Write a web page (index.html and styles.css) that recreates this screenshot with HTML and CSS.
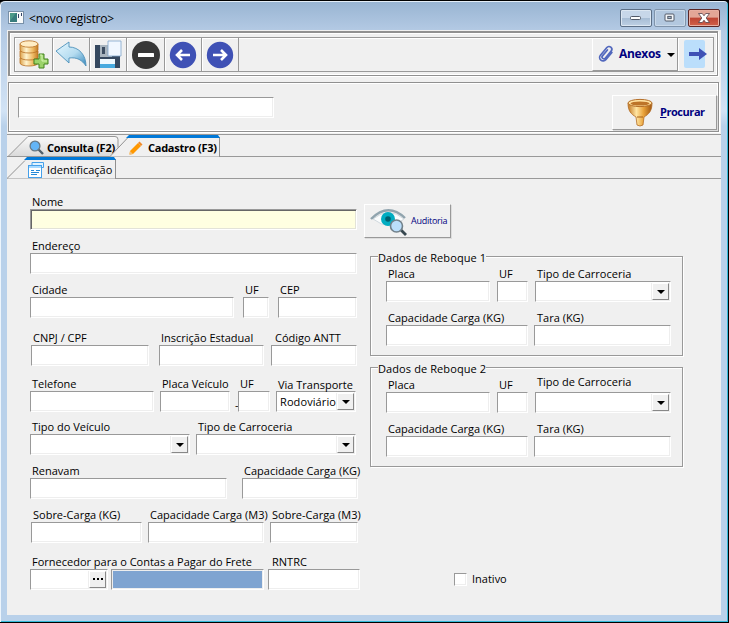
FILE: index.html
```html
<!DOCTYPE html>
<html lang="pt-BR">
<head>
<meta charset="utf-8">
<title>novo registro</title>
<link rel="stylesheet" href="styles.css">
</head>
<body>
<div class="window">
  <header class="titlebar">
    <svg class="app-icon" width="16" height="14" viewBox="0 0 16 14"><rect x=".5" y=".5" width="15" height="12" fill="#f8fafa" stroke="#7890a8"/><rect x="2" y="2" width="7" height="9" fill="#387c7c"/><path d="M2 2h6L2 10z" fill="#4c9a88"/><path d="M10 3h1v4h-1zM13 2h1v3h-1z" fill="#346"/></svg>
    <span class="title">&lt;novo registro&gt;</span>
    <div class="controls">
      <span class="ctl"><svg width="12" height="6"><rect x=".5" y="1.500" width="10" height="3" rx="1" fill="#fff" stroke="#535a68"/></svg></span>
      <span class="ctl dim"><svg width="12" height="10"><rect x="1" y="1" width="9" height="7" rx="1" fill="#f4f7fa" stroke="#535a68"/><rect x="3.800" y="3.400" width="3.400" height="2.200" fill="#a9bdd2" stroke="#535a68"/></svg></span>
      <span class="ctl close"><svg width="12" height="10" viewBox="0 0 12 10"><path d="M.5.5h3.800L6 2.800 7.700.5h3.800L8.200 5l3.300 4.500H7.700L6 7.200 4.300 9.500H.5L3.800 5z" fill="#fff" stroke="#574049" stroke-width=".8"/></svg></span>
    </div>
  </header>

  <main class="client">
    <div class="panel tools">
      <div class="strip">
        <span class="tool w38"><svg width="31" height="31" viewBox="0 0 31 31"><defs><linearGradient id="gold"><stop offset="0" stop-color="#dda24b"/><stop offset=".35" stop-color="#fff4cf"/><stop offset=".7" stop-color="#efbd68"/><stop offset="1" stop-color="#c47b25"/></linearGradient></defs><g fill="url(#gold)" stroke="#b97125" stroke-width=".8"><path d="M2 19v5c0 4 18 4 18 0v-5z"/><path d="M2 12v6c0 4 18 4 18 0v-6z"/><path d="M2 5v6c0 4 18 4 18 0V5z"/><ellipse cx="11" cy="5" rx="9" ry="3.200" fill="#ffedc4"/></g><path d="M21 15h5v5h4v5h-4v4h-5v-4h-5v-5h5z" fill="#9bd36a" stroke="#43821e"/><path d="M22 16h2v6h5" fill="none" stroke="#d7f5b3"/></svg></span>
        <span class="tool w37"><svg width="33" height="30" viewBox="0 0 33 30"><defs><linearGradient id="ice" x2="1" y2="1"><stop offset="0" stop-color="#e7f8ff"/><stop offset=".55" stop-color="#b5dcf0"/><stop offset="1" stop-color="#3688bd"/></linearGradient></defs><path d="M1 11 14 2v5c10 0 17 8 17 19-4-6-9-9-17-8v5z" fill="url(#ice)" stroke="#4d91ba" stroke-width=".9"/></svg></span>
        <span class="tool w37"><svg width="28" height="30" viewBox="0 0 28 30"><path d="M1 5h22l3 3v20H1z" fill="#35485f"/><path d="M6 5h12v12H6z" fill="#a9b5bf"/><path d="M8 7h3v7H8z" fill="#3c4d61"/><path d="M14 1h13v15H14z" fill="#f0f7ff" stroke="#81a6cc" stroke-width=".8"/><path d="M6 19h15v9H6z" fill="#eef9ff"/><path d="M6 24h15v4H6z" fill="#47aadf"/></svg></span>
        <span class="tool w38"><svg width="30" height="30"><circle cx="15" cy="15" r="14" fill="#373737"/><rect x="7" y="13" width="16" height="4" rx=".6" fill="#fff"/></svg></span>
        <span class="tool w37"><svg width="28" height="28"><circle cx="14" cy="14" r="13.200" fill="#3f51b5"/><path d="M21 14H9M13 9l-5 5 5 5" fill="none" stroke="#fff" stroke-width="2.600"/></svg></span>
        <span class="tool w37"><svg width="28" height="28"><circle cx="14" cy="14" r="13.200" fill="#3f51b5"/><path d="M7 14h12M15 9l5 5-5 5" fill="none" stroke="#fff" stroke-width="2.600"/></svg></span>
        <div class="anexos">
          <svg class="clip" width="18" height="18" viewBox="0 0 18 18"><g transform="rotate(40 9 9)" fill="none" stroke="#5268bd" stroke-width="1.700" stroke-linecap="round"><path d="M12.500 4v9.500a3.500 3.500 0 0 1-7 0V3.500a2.800 2.800 0 0 1 5.600 0v9.200a1.800 1.800 0 0 1-3.600 0V5"/></g></svg>
          <b>Anexos</b>
          <i class="drop"></i>
        </div>
        <span class="exit"><svg width="24" height="28"><rect width="21" height="28" rx="2" fill="#bbdefb"/><path d="M5 12h10V8l8 6-8 6v-4H5z" fill="#3f51b5"/></svg></span>
      </div>
    </div>

    <div class="panel search">
      <div class="box query"></div>
      <div class="button find">
        <svg width="26" height="30" viewBox="0 0 26 30"><defs><linearGradient id="amber"><stop offset="0" stop-color="#c37823"/><stop offset=".35" stop-color="#ffe5a2"/><stop offset=".65" stop-color="#e9a239"/><stop offset="1" stop-color="#9d5511"/></linearGradient></defs><path d="M1 5c0 8 3 11 8 14l1 8q3 2 6 0l1-8c5-3 8-6 8-14z" fill="url(#amber)" stroke="#b36c24" stroke-width=".8"/><ellipse cx="13" cy="5" rx="12" ry="3.600" fill="#ffe2a0" stroke="#b56f29"/><ellipse cx="13" cy="5.500" rx="9.500" ry="2.100" fill="#bd7428"/><path d="M10 19h6" stroke="#a65e17"/></svg>
        <b><u>P</u>rocurar</b>
      </div>
    </div>

    <nav class="tabs main">
      <div class="tab consulta">
        <svg class="shape" width="112" height="22"><defs><linearGradient id="tabfill" x2="0" y2="1"><stop offset="0" stop-color="#fafafa"/><stop offset="1" stop-color="#d9d9d9"/></linearGradient></defs><path d="M1 21.500 21 1.500h87l3 3v8l-9 9z" fill="url(#tabfill)"/><path d="M1 21.500 21 1.500h87q3 0 3 3v8M1 21.500h101" fill="none" stroke="#979797"/></svg>
        <svg width="15" height="15" viewBox="0 0 15 15"><path d="m9 9 5 5" stroke="#50606b" stroke-width="2.400"/><circle cx="6" cy="6" r="4.900" fill="#64b5f6" stroke="#687985" stroke-width="1.300"/></svg>
        <b>Consulta (F2)</b>
      </div>
      <div class="tab cadastro">
        <svg class="shape" width="112" height="22"><path d="M1 21.500 20 1.500h90v20z" fill="#f0f0f0"/><path d="M1 21.500 19 2.500M110.500 2v20" fill="none" stroke="#909090"/><path d="M20 0h89l2 3H17z" fill="#0078d7"/></svg>
        <svg width="14" height="14" viewBox="0 0 14 14"><path d="m1 10 8-8 3 3-8 8-3.500.5z" fill="#ff9800"/><path d="m9 2 1.500-1.500 3 3L12 5z" fill="#f08a2b"/><path d="m1 10 3 3-3.500.7z" fill="#f0bd78"/></svg>
        <b>Cadastro (F3)</b>
      </div>
    </nav>
    <nav class="tabs sub">
      <div class="tab ident">
        <svg class="shape" width="112" height="22"><path d="M0 21.500 20 1.500h88v20z" fill="#f0f0f0"/><path d="M0 21.500 18 3.500M108.500 2v20" fill="none" stroke="#909090"/><path d="M20 0h87l2 3H17z" fill="#0078d7"/></svg>
        <svg width="16" height="16" viewBox="0 0 16 16"><path d="M4 .5h11.500v5H14V5H4z" fill="#e0f3ff" stroke="#45a0ea"/><rect x=".5" y="3.500" width="13" height="12" fill="#fff" stroke="#45a0ea"/><path d="M1 4h12v2H1z" fill="#a8daff"/><path d="M3 8.500h3M8 8.500h4M3 10.500h8M3 12.500h6" stroke="#2589d7"/></svg>
        <span>Identificação</span>
      </div>
    </nav>

    <section class="sheet">
      <div class="left">
        <div class="row r1"><div class="field"><label>Nome</label><div class="box focus"></div></div></div>
        <div class="row r1"><div class="field"><label>Endereço</label><div class="box"></div></div></div>
        <div class="row r3"><div class="field"><label>Cidade</label><div class="box"></div></div><div class="field"><label>UF</label><div class="box"></div></div><div class="field"><label>CEP</label><div class="box"></div></div></div>
        <div class="row r4"><div class="field"><label>CNPJ / CPF</label><div class="box"></div></div><div class="field"><label>Inscrição Estadual</label><div class="box"></div></div><div class="field"><label class="in4">Código ANTT</label><div class="box"></div></div></div>
        <div class="row r5"><div class="field"><label>Telefone</label><div class="box"></div></div><div class="field"><label>Placa Veículo</label><div class="box"></div></div><span class="dash">-</span><div class="field"><label>UF</label><div class="box"></div></div><div class="field"><label class="low">Via Transporte</label><div class="box combo"><span>Rodoviário</span><i class="arrow"></i></div></div></div>
        <div class="row r6"><div class="field"><label>Tipo do Veículo</label><div class="box combo"><i class="arrow"></i></div></div><div class="field"><label>Tipo de Carroceria</label><div class="box combo"><i class="arrow"></i></div></div></div>
        <div class="row r7"><div class="field"><label>Renavam</label><div class="box"></div></div><div class="field"><label>Capacidade Carga (KG)</label><div class="box"></div></div></div>
        <div class="row r8"><div class="field"><label>Sobre-Carga (KG)</label><div class="box"></div></div><div class="field"><label>Capacidade Carga (M3)</label><div class="box"></div></div><div class="field"><label>Sobre-Carga (M3)</label><div class="box"></div></div></div>
        <div class="row r9"><div class="field"><label>Fornecedor para o Contas a Pagar do Frete</label><div class="box combo"><i class="dots"></i></div></div><div class="field bare"><div class="box blue"></div></div><div class="field"><label class="in4">RNTRC</label><div class="box"></div></div></div>
      </div>

      <div class="right">
        <div class="button audit">
          <svg width="39" height="30" viewBox="0 0 39 30"><path d="M3 13Q19 0 34 13 20 26 3 13" fill="#fafcfd" stroke="#d0d8dd"/><circle cx="18" cy="13" r="7" fill="#00acc1"/><circle cx="18" cy="13" r="2.800" fill="#006070"/><path d="M1 13Q18-4 35 12" fill="none" stroke="#90a4ae" stroke-width="2.400"/><path d="m31 24 5 5" stroke="#37474f" stroke-width="2.800"/><circle cx="26.500" cy="20" r="6" fill="#bbdefb" stroke="#71808a" stroke-width="1.600"/></svg>
          <span>Auditoria</span>
        </div>
        <div class="group">
          <span class="legend">Dados de Reboque 1</span>
          <div class="row g1"><div class="field"><label>Placa</label><div class="box"></div></div><div class="field"><label>UF</label><div class="box"></div></div><div class="field"><label>Tipo de Carroceria</label><div class="box combo"><i class="arrow"></i></div></div></div>
          <div class="row g2"><div class="field"><label>Capacidade Carga (KG)</label><div class="box"></div></div><div class="field"><label class="in3">Tara (KG)</label><div class="box"></div></div></div>
        </div>
        <div class="group">
          <span class="legend">Dados de Reboque 2</span>
          <div class="row g1"><div class="field"><label>Placa</label><div class="box"></div></div><div class="field"><label>UF</label><div class="box"></div></div><div class="field"><label class="high">Tipo de Carroceria</label><div class="box combo"><i class="arrow"></i></div></div></div>
          <div class="row g2"><div class="field"><label>Capacidade Carga (KG)</label><div class="box"></div></div><div class="field"><label class="in3">Tara (KG)</label><div class="box"></div></div></div>
        </div>
        <div class="inactive"><i class="check"></i><span>Inativo</span></div>
      </div>
    </section>
  </main>
</div>
</body>
</html>
```
FILE: styles.css
```css
* { box-sizing: border-box; }
body { margin: 0; overflow: hidden; background: #000; font: 11px/14px "Open Sans", "Noto Sans", sans-serif; color: #000; }
svg { display: block; flex: none; }
b { font-weight: 700; }

.window { width: 729px; height: 623px; padding: 0 6px 7px 6px; border: 1px solid #000; border-width: 1px 1px 1px 0; border-radius: 5px 5px 0 0; background: linear-gradient(#98b4d2, #b4cae4 30px, #d2e3f5 110px, #b9d1ea 125px); box-shadow: inset 1px 0 #edf5fc, inset -1px -1px #35b9d8, inset 0 1px #e4eef8; }
.titlebar { height: 29px; display: flex; align-items: flex-start; padding: 10px 2px 0 2px; }
.title { margin: 0 0 0 5px; font-size: 12px; line-height: 16px; letter-spacing: -.2px; }
.controls { display: flex; gap: 2px; margin: -2px 0 0 auto; }
.ctl { width: 32px; height: 18px; display: flex; align-items: center; justify-content: center; border: 1px solid #5c6f86; border-radius: 2px; background: linear-gradient(#c7d7e9 0 48%, #a6bcd4 50%, #bed0e4); box-shadow: inset 0 0 0 1px #dce7f2; }
.ctl.dim { border-color: #8094ab; background: #b3c8df; box-shadow: inset 0 0 0 1px #c9d9ea; }
.ctl.close { border-color: #5b2727; background: linear-gradient(#e3a697 0 45%, #be4534 50%, #d1614a); box-shadow: inset 0 0 0 1px #e8afa2; }

.client { height: 585px; margin-left: 1px; width: 714px; background: #f0f0f0; }
.panel { border: 1px solid #909090; box-shadow: inset 1px 1px #fff, 1px 1px #fff, inset -1px -1px #fff; }
.tools { margin: 0 3px 0 1px; padding: 4px 3px 3px 4px; height: 45px; border-width: 2px 1px 1px 2px; position: relative; top: 1px; }
.strip { height: 35px; display: flex; border: 1px solid #999; box-shadow: inset 1px 1px #fff; }
.tool { height: 33px; display: flex; align-items: center; justify-content: center; border-right: 1px solid #999; box-shadow: inset 1px 1px #fff; }
.w38 { width: 38px; } .w37 { width: 37px; }
.anexos { width: 86px; margin-left: auto; display: flex; align-items: center; border-left: 1px solid #fff; border-right: 1px solid #999; border-bottom: 1px solid #999; color: #000080; font-size: 12px; }
.anexos b { letter-spacing: -.3px; }
.clip { margin: 0 4px 0 4px; }
.drop { border: 4px solid transparent; border-top-color: #000; border-bottom: 0; margin: 2px 0 0 6px; }
.exit { width: 35px; padding: 2px 0 0 6px; box-shadow: inset 1px 1px #fff; }

.search { margin: 7px 2px 0 1px; height: 50px; display: flex; justify-content: space-between; padding: 0 0 0 9px; }
.query { width: 256px; margin-top: 14px; }
.button { display: flex; align-items: center; border: 1px solid #fff; border-right-color: #999; border-bottom-color: #999; color: #000080; box-shadow: 1px 1px #ddd; }
.find { width: 105px; height: 35px; margin: 12px 1px 0 0; padding-left: 14px; gap: 7px; }
.find b { letter-spacing: -.45px; margin-top: -2px; }

.tabs { height: 22px; display: flex; border-bottom: 1px solid #999; }
.tabs.main { margin-top: 2px; border-top: 1px solid #999; height: 23px; }
.tab { position: relative; height: 22px; display: flex; align-items: center; white-space: nowrap; }
.tab b { letter-spacing: -.25px; }
.shape { position: absolute; left: 0; top: 0; }
.tab > :not(.shape) { position: relative; }
.consulta { width: 102px; padding: 3px 0 0 22px; gap: 3px; }
.cadastro { width: 112px; padding: 3px 0 0 20px; gap: 5px; }
.ident { width: 112px; padding: 3px 0 0 21px; gap: 3px; }

.sheet { display: flex; padding: 16px 0 0 23px; }
.left { width: 334px; }
.row { display: grid; height: 35px; }
.left .row + .row { margin-top: 9px; }
.left .row.r4 { margin-top: 13px; }
.left .row.r5 { margin-top: 11px; }
.left .row.r6 { margin-top: 8px; }
.left .row.r9 { margin-top: 12px; }
.r1 { grid-template-columns: 327px; }
.r3 { grid-template-columns: 204px 26px 79px; column-gap: 9px; }
.r4 { grid-template-columns: 128px 112px 86px; padding-left: 1px; }
.r4 .field:nth-child(1) { width: 118px; }
.r4 .field:nth-child(2) { width: 105px; }
.r5 { grid-template-columns: 130px 75px 3px 38px 80px; }
.r5 .field:nth-child(1) { width: 124px; }
.r5 .field:nth-child(2) { width: 70px; }
.r5 .field:nth-child(4) { width: 32px; }
.r6 { grid-template-columns: 160px 160px; column-gap: 6px; }
.r7 { grid-template-columns: 197px 116px; column-gap: 15px; }
.r8 { grid-template-columns: 111px 116px 88px; column-gap: 6px; padding-left: 1px; }
.r9 { grid-template-columns: 81px 157px 92px; }
.r9 .field:nth-child(1) { width: 78px; }
.r9 .field:nth-child(2) { width: 153px; }
.field { min-width: 0; }
.field label { display: block; height: 14px; padding-left: 2px; white-space: nowrap; }
.field label.in3 { padding-left: 3px; }
.field label.in4 { padding-left: 4px; }
.field label.low { line-height: 16px; }
.field label.high { line-height: 8px; }
.bare { padding-top: 14px; }
.dash { padding-top: 21px; }
.box { height: 21px; background: #fff; border: 1px solid #999; border-right-color: #fff; border-bottom-color: #fff; box-shadow: inset -1px -1px #eee; }
.box.focus { background: #ffffe1; box-shadow: inset 1px 1px #666, inset -1px -1px #e3e3d8; }
.box.blue { background: #7fa4d1; box-shadow: inset 0 0 0 1px #eee; }
.combo { display: flex; justify-content: flex-end; padding: 1px; }
.combo span { flex: 1; padding-left: 2px; line-height: 18px; letter-spacing: .1px; }
.arrow, .dots { width: 17px; height: 17px; display: flex; align-items: center; justify-content: center; background: #f0f0f0; border: 1px solid #fff; border-right-color: #888; border-bottom-color: #888; box-shadow: -1px 0 #eee; }
.arrow::before { content: ""; border: 4px solid transparent; border-top-color: #000; border-bottom: 0; }
.dots::before { content: ""; width: 10px; height: 2px; margin-top: -2px; background: repeating-linear-gradient(90deg, #000 0 2px, transparent 2px 4px); }

.right { width: 320px; padding-top: 9px; }
.audit { width: 87px; height: 34px; padding-left: 5px; gap: 2px; font-size: 9px; letter-spacing: -.25px; }
.group { position: relative; width: 313px; height: 100px; margin: 18px 0 0 6px; padding: 10px 0 0 15px; border: 1px solid #999; box-shadow: inset 1px 1px #fff, 1px 1px #fff; }
.group + .group { margin-top: 11px; }
.legend { position: absolute; left: 7px; top: -6px; background: #f0f0f0; white-space: nowrap; line-height: 14px; letter-spacing: .1px; }
.g1 { grid-template-columns: 104px 31px 136px; column-gap: 7px; }
.g2 { grid-template-columns: 142px 137px; column-gap: 6px; margin-top: 9px; }
.inactive { display: flex; align-items: center; gap: 5px; margin: 105px 0 0 90px; }
.check { width: 13px; height: 13px; background: #fff; border: 1px solid #999; border-right-color: #fff; border-bottom-color: #fff; box-shadow: inset -1px -1px #eee; }
```
